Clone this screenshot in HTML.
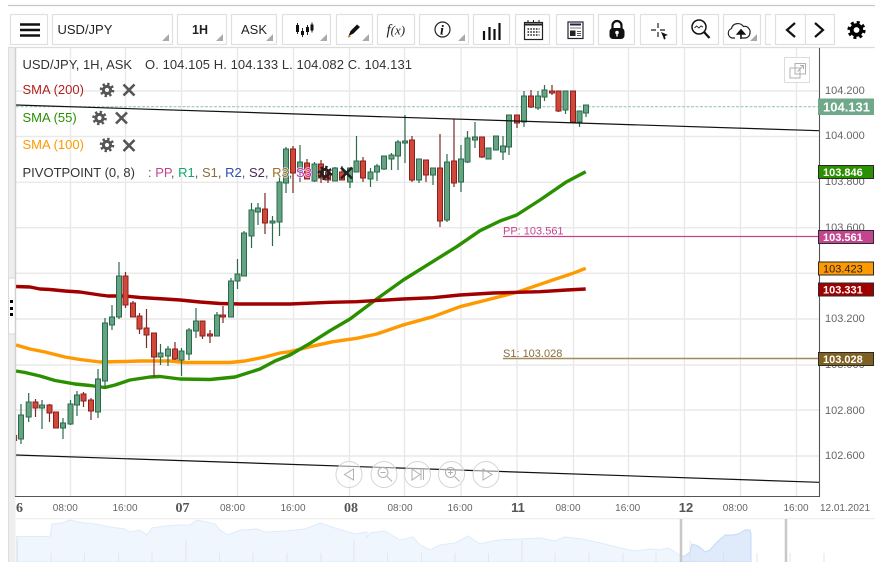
<!DOCTYPE html>
<html><head><meta charset="utf-8"><title>USD/JPY</title>
<style>
html,body{margin:0;padding:0;background:#fff;width:879px;height:570px;overflow:hidden}
svg{display:block;font-family:"Liberation Sans",sans-serif}
.b{fill:#fff;stroke:#e0e0e0;stroke-width:1.2}
.t{font-size:13px;fill:#222}
.l{font-size:13px;paint-order:stroke;stroke:#fff;stroke-width:1.5px;stroke-opacity:.75}
.y{font-size:11px;fill:#666}
.x{font-size:10px;fill:#666}
.c{fill:#fff;fill-opacity:.55;stroke:#d4d4d4}
.i{fill:none;stroke:#b0b0b0}
</style></head><body>
<svg width="879" height="570" viewBox="0 0 879 570" xmlns="http://www.w3.org/2000/svg">
<defs>
<g id="gear"><circle r="3.6" fill="none" stroke-width="3"/><circle r="6" fill="none" stroke-width="2.6" stroke-dasharray="2.36 2.35"/></g>
</defs>
<rect width="879" height="570" fill="#fff"/>
<!-- frame lines -->
<path d="M8 5.5H875" stroke="#c8c8c8" stroke-width="1.2"/>
<path d="M8 47.5H875" stroke="#dcdcdc" stroke-width="1.2"/>
<!-- toolbar buttons -->
<rect class="b" x="10.5" y="14.5" width="37" height="30"/>
<rect class="b" x="52.5" y="14.5" width="120" height="30"/>
<rect class="b" x="177.5" y="14.5" width="49" height="30"/>
<rect class="b" x="231.5" y="14.5" width="45" height="30"/>
<rect class="b" x="282.5" y="14.5" width="48" height="30"/>
<rect class="b" x="336.5" y="14.5" width="36" height="30"/>
<rect class="b" x="377.5" y="14.5" width="37" height="30"/>
<rect class="b" x="419.5" y="14.5" width="49" height="30"/>
<rect class="b" x="473.5" y="14.5" width="36" height="30"/>
<rect class="b" x="515.5" y="14.5" width="34" height="30"/>
<rect class="b" x="556.5" y="14.5" width="37" height="30"/>
<rect class="b" x="598.5" y="14.5" width="36" height="30"/>
<rect class="b" x="640.5" y="14.5" width="36" height="30"/>
<rect class="b" x="682.5" y="14.5" width="36" height="30"/>
<rect class="b" x="723.5" y="14.5" width="37" height="30"/>
<path class="b" d="M771 14.5H765.5V44.5H771"/>
<rect class="b" x="775.5" y="14.5" width="30" height="30"/>
<rect class="b" x="805.5" y="14.5" width="29" height="30"/>
<!-- corner triangles -->
<path fill="#aaa" d="M169 34v7h-7zM223 34v7h-7zM273 34v7h-7zM327 34v7h-7zM369 34v7h-7zM465 34v7h-7zM757 34v7h-7z"/>
<!-- hamburger -->
<path d="M20 24.5H40M20 30H40M20 35.5H40" stroke="#111" stroke-width="2.4"/>
<text class="t" x="57.5" y="34">USD/JPY</text>
<text class="t" x="192" y="34" style="font-weight:bold;font-size:12.5px">1H</text>
<text class="t" x="241" y="34">ASK</text>
<!-- candles icon -->
<path d="M297.500 23v11M302.500 28v9M307.500 25v10M312 22.500v10" stroke="#222" stroke-width="1"/>
<path d="M296 25h3v7h-3zM301 31h3v4h-3zM306 27h3v5h-3zM310.500 24.500h3v6h-3z" fill="#111"/>
<!-- pen -->
<path d="M348.500 36l2-5 6.500-6.500 3 2.500-6.500 6.500z" fill="#111"/><path d="M348 37l2.500-1" stroke="#d89020" stroke-width="1.500"/>
<text x="386.500" y="34.500" style="font-family:'Liberation Serif',serif;font-style:italic;font-size:15px" fill="#222">f<tspan font-size="13">(x)</tspan></text>
<!-- info -->
<circle cx="442.500" cy="29.500" r="7.500" fill="none" stroke="#222" stroke-width="1.200"/>
<text x="440" y="34.500" style="font-family:'Liberation Serif',serif;font-style:italic;font-size:14px;font-weight:bold" fill="#111">i</text>
<!-- bars -->
<path d="M484 40V31M489.500 40V27M494.500 40V29M499.500 40V23" stroke="#111" stroke-width="2.200"/>
<!-- calendar -->
<rect x="524.500" y="22.500" width="18" height="17" fill="#fff" stroke="#222" stroke-width="1.200"/>
<path d="M524.500 24.500H542.500" stroke="#222" stroke-width="2"/>
<path d="M528 20v3M533.500 20v3M539 20v3" stroke="#222"/>
<path d="M527.500 29h12M527.500 32h12M527.500 35h12" stroke="#222" stroke-width="1.600" stroke-dasharray="1.600 1.200"/>
<!-- news -->
<rect x="568" y="22" width="15" height="16.500" fill="#fff" stroke="#223" stroke-width="1.200"/>
<path d="M570 24.500h11" stroke="#223" stroke-width="2"/>
<path d="M570 28h11" stroke="#777"/>
<rect x="570" y="30.500" width="5.500" height="5.500" fill="#222"/>
<path d="M577 31.500h4M577 33.500h4M577 35.500h4" stroke="#555"/>
<!-- lock -->
<path d="M612.500 29v-3.500a4.500 4.500 0 0 1 9 0V29" fill="none" stroke="#111" stroke-width="2.200"/>
<rect x="609.500" y="28" width="15" height="11" rx="3.500" fill="#111"/>
<circle cx="617" cy="32.500" r="1.800" fill="#fff"/><path d="M617 33v3.500" stroke="#fff" stroke-width="1.400"/>
<!-- crosshair -->
<path d="M658 23v5M658 32v5M651 30h5M660 30h5" stroke="#222" stroke-width="1.200"/>
<path d="M661 32l7 3-3 1 .5 3-1.500 .5-1-3z" fill="#111"/>
<!-- search -->
<circle cx="699" cy="27" r="7" fill="#fff" stroke="#111" stroke-width="1.500"/>
<path d="M704 32l5.500 6" stroke="#111" stroke-width="2.200"/>
<path d="M694.500 28l2-2 2.500 2 2-2 2 1" fill="none" stroke="#333"/>
<!-- cloud -->
<path d="M735 38h-3a5 5 0 0 1-.5-9.500c1-5 8-7 12-2 4-1 7 3 6.500 6 0 3-2 5.500-5 5.500h-3" fill="none" stroke="#222" stroke-width="1.200"/>
<path d="M741 39v-8M737.500 34l3.500-4 3.500 4z" stroke="#111" stroke-width="1.600" fill="#111"/>
<!-- chevrons -->
<path d="M795 23l-8 7 8 7M815 23l8 7-8 7" fill="none" stroke="#111" stroke-width="2.200"/>
<!-- settings gear -->
<g transform="translate(856.500 30)" stroke="#000"><circle r="4.800" fill="none" stroke-width="3.800"/><circle r="7.500" fill="none" stroke-width="3.200" stroke-dasharray="2.950 2.940"/></g>

<!-- sidebar -->
<rect x="8" y="48" width="7.500" height="514" fill="#eeeeee"/>
<path d="M8.500 48V562" stroke="#dedede"/>
<rect x="8.500" y="278" width="7" height="56" fill="#fff" stroke="#d8d8d8"/>
<path fill="#000" d="M10 300h3v3h-3zM10 307h3v3h-3zM10 313h3v3h-3z"/>

<!-- grid -->
<g stroke="#e9e9e9" stroke-width="1.400" fill="none">
<path d="M16 91H819M16 136.500H819M16 182.300H819M16 227.700H819M16 273.300H819M16 319H819M16 365H819M16 410H819M16 456H819"/>
<path d="M70.500 48V496M125.500 48V496M181.500 48V496M237.500 48V496M293.500 48V496M349.500 48V496M404.500 48V496M461 48V496M517 48V496M573.500 48V496M628.500 48V496M684.500 48V496M740.500 48V496M796.500 48V496"/>
</g>

<path d="M16 106.700H819" stroke="#9fc9b3" stroke-width="1.200" stroke-dasharray="3 1.500" fill="none"/>

<!-- SMA lines -->
<g fill="none" stroke-width="3.400" stroke-linejoin="round" stroke-linecap="butt">
<path stroke="#ff9900" d="M16 345L30 349L45 352L65 357L80 359.500L100 362L125 361.500L140 361L170 361L185 362.500L230 362.500L245 361L265 357L280 353L290 351.700L310 346.700L333 341.700L356.700 338.300L376.700 334L403 325L433 316.700L460 306.700L486.700 300L516.700 292.300L543 283.300L573 273.300L585.700 268.300"/>
<path stroke="#2a9000" d="M16 371L25 372.500L40 376L55 380.500L75 384L90 385.500L105 387.500L115 385L130 380L150 377L160 376.500L180 379L210 379.500L235 377L260 369L275 361L290 355L310 343.300L330 330.700L350 319L376.700 299L403.300 280L430 263.300L456.700 246.700L480 230.700L500 221L516.700 215L540 200L566.700 181.700L585.700 171.700"/>
<path stroke="#a00000" d="M16 286.500L30 287L40 289L50 289.500L65 291L80 292L100 295L108 296L125 296L140 297.500L165 299L180 300L200 302L220 303.500L240 304L290 304L330 302.300L356.700 301.700L403 299L433 297.700L460 295L493 293L540 291.700L566.700 290L585.700 289"/>
</g>

<!-- candles -->
<g style="filter:blur(.3px)">
<path fill="none" stroke="#2c6a4c" stroke-width="1.200" d="M21 404V444M28.700 393V422M42 400V429M63 418V439M70.500 400V425M77 391V416M98 369V418M105 318V388M112 305V330M119 262V319M160.500 344V365M168 346V366M181.500 348V376M189 328V360M196 308V338M217 312V336M231 278V317M237.500 259V289M244 231V276M251.500 203V248M258 203V225M272.500 216V246M279.500 177V236M286 147V193M300 145V182M314.500 162V182M335 167V181M350 168V188M356.500 136V172M370.500 168V187M377 164V181M384 156V170M391.500 153V170M398 140V170M405 115V163M419 159V183M433 168V185M447 154V222M461 145V192M467.500 131V163M475 122V148M488.500 148V159M496 136V150M503 136V160M509 115V155M524 91V127M538 91V110M544.500 85V101M565.500 91V114M579.500 111V127M586 105V117"/>
<path fill="none" stroke="#7a2a28" stroke-width="1.200" d="M16.500 435V441M35.500 399V417M49.500 404V422M56 412V428M83.500 392V407M91 398V420M125.500 272V308M133 301V317M139.500 313V334M146.500 309V348M154 333V377M175 342V360M202.500 321V339M210 330V343M223 306V323M265 193V234M293 146V193M307 159V179M321 160V183M328 172V183M342 166V180M363 157V182M412 136V182M426 160V182M440 134V227M454 119V187M482 137V158M517 115V128M531 90V108M552 85V95M558.500 91V112M573 91V122"/>
<path fill="#66a383" stroke="#2a6a4c" stroke-width="1" d="M18.500 415h5v24h-5zM26.200 402h5v15h-5zM39.500 405h5v3h-5zM60.500 423h5v5h-5zM68 404h5v20h-5zM74.500 395h5v10h-5zM95.500 379h5v33h-5zM102.500 323h5v58h-5zM109.500 317h5v8h-5zM116.500 276h5v41h-5zM158 353h5v4h-5zM165.500 349h5v7h-5zM179 351h5v9h-5zM186.500 330h5v24h-5zM193.500 321h5v10h-5zM214.500 315h5v21h-5zM228.500 281h5v36h-5zM235 274h5v7h-5zM241.500 233h5v43h-5zM249 210h5v26h-5zM255.500 208h5v4h-5zM270 221h5v2h-5zM277 182h5v40h-5zM283.500 149h5v34h-5zM297.500 162h5v10h-5zM312 164h5v17h-5zM332.500 168h5v13h-5zM347.500 168h5v14h-5zM354 161h5v11h-5zM368 172h5v7h-5zM374.500 166h5v6h-5zM381.500 156h5v13h-5zM389 155h5v4h-5zM395.500 142h5v14h-5zM402.500 141h5v2h-5zM416.500 159h5v21h-5zM430.500 168h5v7h-5zM444.500 162h5v58h-5zM458.500 159h5v23h-5zM465 138h5v24h-5zM472.500 137h5v3h-5zM486 148h5v11h-5zM493.500 136h5v14h-5zM500.500 146h5v6h-5zM506.500 115h5v32h-5zM521.500 96h5v26h-5zM535.500 96h5v12h-5zM542 90h5v7h-5zM563 91h5v19h-5zM577 111h5v11h-5zM583.500 105h5v8h-5z"/>
<path fill="#d1483a" stroke="#8a1f1c" stroke-width="1" d="M33 402h5v6h-5zM47 405h5v8h-5zM53.500 412h5v16h-5zM81 394h5v7h-5zM88.500 400h5v11h-5zM123 276h5v29h-5zM130.500 303h5v14h-5zM137 316h5v13h-5zM144 328h5v7h-5zM151.500 333h5v24h-5zM172.500 349h5v10h-5zM200 321h5v15h-5zM207.500 334h5v2h-5zM220.500 315h5v2h-5zM262.500 209h5v14h-5zM290.500 149h5v24h-5zM304.500 163h5v16h-5zM318.500 164h5v14h-5zM325.500 172h5v8h-5zM339.500 172h5v8h-5zM360.500 161h5v17h-5zM409.500 140h5v40h-5zM423.500 160h5v15h-5zM437.500 168h5v53h-5zM451.500 161h5v22h-5zM479.500 137h5v20h-5zM514.500 115h5v8h-5zM528.500 96h5v11h-5zM549.500 91h5v2h-5zM556 91h5v20h-5zM570.500 91h5v31h-5z"/>
</g>
<!-- trend lines over candles -->
<path d="M16 105L819 130.700M16 455L819 482.300" stroke="#111" stroke-width="1.200" fill="none"/>

<!-- pivot lines -->
<path d="M503 236.500H819" stroke="#c4458f" stroke-width="1.200"/>
<path d="M503 358.500H819" stroke="#a08a5c" stroke-width="1.600"/>
<text x="503" y="234.500" style="font-size:11px" fill="#c4458f">PP: 103.561</text>
<text x="503" y="357" style="font-size:11px" fill="#8a6d3b">S1: 103.028</text>

<!-- axes -->
<path d="M15.500 48V496.500H819.500V48" fill="none" stroke="#555" stroke-width="1.100"/>
<path d="M15.500 48V496" stroke="#d0d0d0" stroke-width="1.200"/>

<!-- legend -->
<text class="l" x="22.500" y="69" fill="#333">USD/JPY, 1H, ASK</text>
<text class="l" x="145" y="69" fill="#333" textLength="267">O. 104.105 H. 104.133 L. 104.082 C. 104.131</text>
<text class="l" x="22.500" y="94" fill="#b02020">SMA (200)</text>
<text class="l" x="22.500" y="122" fill="#2a9000">SMA (55)</text>
<text class="l" x="22.500" y="149" fill="#ff9900">SMA (100)</text>
<text class="l" x="22.500" y="177" fill="#333">PIVOTPOINT (0, 8)</text>
<text class="l" x="148" y="177" fill="#555">: <tspan fill="#c4458f">PP</tspan>, <tspan fill="#0ca86e">R1</tspan>, <tspan fill="#8a6d3b">S1</tspan>, <tspan fill="#2f4ea8">R2</tspan>, <tspan fill="#4a2a5a">S2</tspan>, <tspan fill="#a0702a">R3</tspan>, <tspan fill="#e020c0">S3</tspan></text>
<g stroke="#555">
<use href="#gear" transform="translate(107 90)"/><use href="#gear" transform="translate(99.500 118)"/><use href="#gear" transform="translate(107 145)"/>
</g>
<use href="#gear" transform="translate(325 173)" stroke="#222"/>
<path d="M123.500 84.500l11 11M134.500 84.500l-11 11M116 112.500l11 11M127 112.500l-11 11M123.500 140l11 11M134.500 140l-11 11" stroke="#555" stroke-width="2.600"/>
<path d="M341 167.500l11 11M352 167.500l-11 11" stroke="#222" stroke-width="2.600"/>

<!-- popout -->
<rect x="784.500" y="57.500" width="25" height="25" fill="#fff" fill-opacity=".8" stroke="#dcdcdc"/>
<rect class="i" x="790" y="68" width="10" height="10"/>
<rect class="i" x="795" y="63.500" width="10.500" height="10.500" fill="#fff"/>
<path class="i" d="M797.500 71.500l6-6M800 65.500h3.500v3.500"/>

<!-- y-axis ticks -->
<text class="y" x="825" y="94">104.200</text>
<text class="y" x="825" y="139">104.000</text>
<text class="y" x="825" y="185">103.800</text>
<text class="y" x="825" y="231">103.600</text>
<text class="y" x="825" y="322">103.200</text>
<text class="y" x="825" y="368">103.000</text>
<text class="y" x="825" y="414">102.800</text>
<text class="y" x="825" y="459">102.600</text>

<!-- price tags -->
<rect x="818" y="98.500" width="56" height="16.500" fill="#6fa98a"/>
<text x="823" y="111.500" fill="#fff" style="font-size:13px;font-weight:bold">104.131</text>
<g stroke="#2a2a2a" stroke-width="1">
<rect x="818.500" y="165.500" width="55" height="13" fill="#2a9000"/>
<rect x="818.500" y="230.500" width="55" height="13" fill="#c4458f"/>
<rect x="818.500" y="262" width="55" height="13" fill="#ff9900"/>
<rect x="818.500" y="283" width="55" height="13" fill="#a00000"/>
<rect x="818.500" y="352.500" width="55" height="13" fill="#7f6020"/>
</g>
<g style="font-size:11px;font-weight:bold" fill="#fff">
<text x="823" y="175.800">103.846</text>
<text x="823" y="240.800">103.561</text>
<text x="823" y="272.500" fill="#222" style="font-weight:normal">103.423</text>
<text x="823" y="293.500">103.331</text>
<text x="823" y="363">103.028</text>
</g>

<!-- nav buttons -->
<g><circle class="c" cx="349" cy="474.500" r="13"/><circle class="c" cx="384" cy="474.500" r="13"/><circle class="c" cx="417.500" cy="474.500" r="13"/><circle class="c" cx="451.500" cy="474.500" r="13"/><circle class="c" cx="486" cy="474.500" r="13"/></g>
<path class="i" d="M353.500 469v11l-9-5.500z"/>
<circle class="i" cx="383" cy="472.500" r="5"/><path class="i" d="M380.500 472.500h5M387 476.500l5 5"/>
<path class="i" d="M412 469v11l8-5.500zM421 469v11M423.500 469v11"/>
<circle class="i" cx="450.500" cy="472.500" r="5"/><path class="i" d="M448 472.500h5M450.500 470v5M454.500 476.500l5 5"/>
<path class="i" d="M483 469v11l9-5.500z"/>

<!-- x axis -->
<g class="x" text-anchor="middle">
<text x="65.300" y="511">08:00</text><text x="125" y="511">16:00</text><text x="232.500" y="511">08:00</text><text x="293" y="511">16:00</text><text x="400" y="511">08:00</text><text x="460" y="511">16:00</text><text x="568" y="511">08:00</text><text x="627.700" y="511">16:00</text><text x="735.300" y="511">08:00</text><text x="796" y="511">16:00</text><text x="845" y="511">12.01.2021</text>
</g>
<g fill="#555" text-anchor="middle" style="font-family:'Liberation Serif',serif;font-weight:bold;font-size:14px">
<text x="19.500" y="512">6</text><text x="182.500" y="512">07</text><text x="351" y="512">08</text>
</g>
<g fill="#555" text-anchor="middle" style="font-weight:bold;font-size:13px">
<text x="518" y="512">11</text><text x="686" y="512">12</text>
</g>

<!-- navigator -->
<path d="M16 518.700H875" stroke="#eaeaea" stroke-width="1"/>
<path fill="#f0f6fe" stroke="#dfebfb" d="M16.500 562V536.500L48 536.500L50 538L52 524L62 523L70 520L80 522.500L95 524L110 527L125 529L130 532L140 530L147 535L152 528L165 526L180 525L190 525L197 520L215 524L220 530L228 535L240 530L257 529L265 532L285 531L305 529L320 523L335 528L355 534L367 532L367 538L370 533L385 531L400 540L413 537L420 545L430 550L440 545L455 543L468 536L480 544L492 541L500 540L520 539L540 538L555 541L565 537L582 539L605 544L620 548L635 551L650 549L660 550L668 548L672 550L681 556V562Z"/>
<path fill="#dfeafb" stroke="#c4daf8" d="M681 562V556L685 556L690 552L692 544L698 546L702 549L705 552L710 550L716 543L725 535L733 535L738 534L745 530L750 530L751 534V562Z"/>
<path stroke="#d8d8d8" fill="none" opacity=".5" d="M17.500 540V562M186 540V562M354 540V562M522 540V562M690 540V562M51 553V562M84.500 553V562M118.500 553V562M152 553V562M219.500 553V562M253 553V562M287 553V562M321 553V562M387.500 553V562M421.500 553V562M455 553V562M488.500 553V562M555 553V562M589 553V562M623 553V562M656 553V562M723.500 553V562"/>
<path stroke="#eee" stroke-width="1.500" fill="none" d="M757 553V562M790 553V562M824 553V562"/>
<path stroke="#c8c8c8" stroke-width="2.500" d="M681 519V562M786 519V562"/>
<rect x="0" y="562" width="879" height="8" fill="#fff"/>
</svg>
</body></html>
